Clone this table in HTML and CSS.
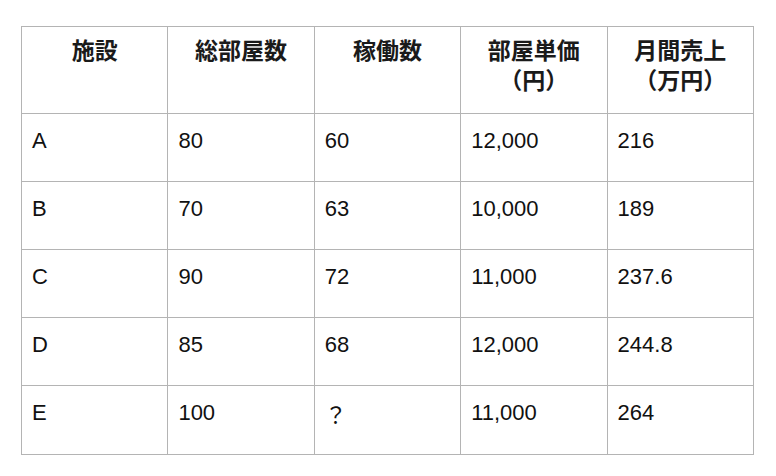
FILE: index.html
```html
<!DOCTYPE html>
<html lang="ja">
<head>
<meta charset="utf-8">
<link rel="stylesheet" href="styles.css">
</head>
<body>
<table class="grid">
  <thead>
    <tr>
      <th>施設</th>
      <th>総部屋数</th>
      <th>稼働数</th>
      <th>部屋単価<br>（円）</th>
      <th>月間売上<br>（万円）</th>
    </tr>
  </thead>
  <tbody>
    <tr><td>A</td><td>80</td><td>60</td><td>12,000</td><td>216</td></tr>
    <tr><td>B</td><td>70</td><td>63</td><td>10,000</td><td>189</td></tr>
    <tr><td>C</td><td>90</td><td>72</td><td>11,000</td><td>237.6</td></tr>
    <tr><td>D</td><td>85</td><td>68</td><td>12,000</td><td>244.8</td></tr>
    <tr class="last"><td>E</td><td>100</td><td><span class="q">？</span></td><td>11,000</td><td>264</td></tr>
  </tbody>
</table>
</body>
</html>
```
FILE: styles.css
```css
html, body {
  margin: 0;
  padding: 0;
  background: #ffffff;
}
body {
  padding: 26px 0 0 21px;
  font-family: "Liberation Sans", Arial, "Noto Sans CJK JP", sans-serif;
  color: #111111;
}
.grid {
  border-collapse: collapse;
  table-layout: fixed;
  width: 733px;
}
.grid th,
.grid td {
  border: 1.5px solid #b4b4b4;
  vertical-align: top;
  box-sizing: border-box;
}
.grid th {
  font-family: "Noto Sans CJK JP", sans-serif;
  font-weight: 700;
  font-size: 23px;
  line-height: 30px;
  text-align: center;
  height: 87px;
  padding: 7px 4px 0;
  color: #1a1a1a;
}
.grid td {
  font-size: 22px;
  line-height: 26px;
  text-align: left;
  height: 68px;
  padding: 14px 10px 0;
}
.grid .last td {
  height: 69px;
}
.q {
  font-family: "Noto Sans CJK JP", sans-serif;
}
```
